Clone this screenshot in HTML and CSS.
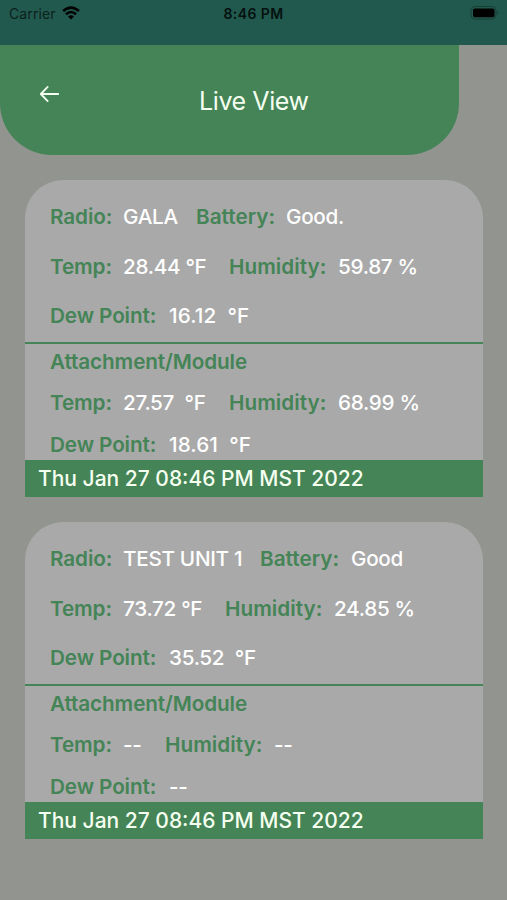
FILE: index.html
```html
<!DOCTYPE html>
<html lang="en">
<head>
<meta charset="utf-8">
<title>Live View</title>
<link rel="stylesheet" href="styles.css">
</head>
<body>
<div class="status">
  <div class="carrier"><span>Carrier</span>
    <svg class="wifi" width="18" height="14" viewBox="0 0 18 14"><g fill="none" stroke="#000"><path stroke-width="2.7" d="M1.1 5.1Q9 -1.9 16.9 5.1"/><path stroke-width="2.6" d="M4 8.2Q9 3.8 14 8.2"/></g><path d="M6 10.5Q9 7.9 12 10.5L9 13.5Z"/></svg>
  </div>
  <div class="clock">8:46 PM</div>
  <svg class="battery" width="30" height="14" viewBox="0 0 30 14"><rect x="1" y=".5" width="25" height="12.5" rx="4" fill="none" stroke="#183f34"/><rect x="3" y="2.5" width="21.5" height="8.8" rx="1.8"/><path fill="#183f34" d="M27.5 4.8q2 2 0 4z"/></svg>
</div>
<header class="header">
  <svg class="back" width="21" height="18" viewBox="0 0 21 18" fill="none" stroke="#f5fff0" stroke-width="1.8" stroke-linecap="round" stroke-linejoin="round"><path d="M19.2 9H1.8M8.7 1.9L1.8 9l6.9 7.1"/></svg>
  <h1 class="title">Live View</h1>
</header>
<main class="cards">
  <section class="card">
    <div class="base">
      <div class="row radio-gala"><b>Radio:</b><span>GALA</span><b class="wide">Battery:</b><span>Good.</span></div>
      <div class="row climate"><b>Temp:</b><span>28.44 °F</span><b class="wide">Humidity:</b><span>59.87 %</span></div>
      <div class="row dew"><b>Dew Point:</b><span class="wide">16.12&nbsp; °F</span></div>
    </div>
    <div class="module">
      <div class="row heading"><b>Attachment/Module</b></div>
      <div class="row climate"><b>Temp:</b><span>27.57&nbsp; °F</span><b class="wide">Humidity:</b><span>68.99 %</span></div>
      <div class="row dew last"><b>Dew Point:</b><span class="wide">18.61&nbsp; °F</span></div>
    </div>
    <footer class="stamp">Thu Jan 27 08:46 PM MST 2022</footer>
  </section>
  <section class="card">
    <div class="base">
      <div class="row radio-test"><b>Radio:</b><span>TEST UNIT 1</span><b class="wide">Battery:</b><span>Good</span></div>
      <div class="row climate-test"><b>Temp:</b><span>73.72 °F</span><b class="wide">Humidity:</b><span>24.85 %</span></div>
      <div class="row dew"><b>Dew Point:</b><span>35.52&nbsp; °F</span></div>
    </div>
    <div class="module">
      <div class="row heading"><b>Attachment/Module</b></div>
      <div class="row climate-empty"><b>Temp:</b><span>--</span><b class="wide">Humidity:</b><span>--</span></div>
      <div class="row dew last"><b>Dew Point:</b><span>--</span></div>
    </div>
    <footer class="stamp">Thu Jan 27 08:46 PM MST 2022</footer>
  </section>
</main>
</body>
</html>
```
FILE: styles.css
```css
* { box-sizing: border-box; }
body {
  margin: 0;
  height: 900px;
  overflow: hidden;
  background: #91948f;
  font-family: Inter, "Liberation Sans", sans-serif;
}
.status {
  height: 44.5px;
  padding: 5px 7px 0 9px;
  display: grid;
  grid-template-columns: 1fr auto 1fr;
  align-items: start;
  background: #22594e;
  color: #061713;
  font-size: 14px;
  line-height: 18px;
}
.carrier { display: flex; gap: 6px; color: #0a211c; letter-spacing: 0.12px; }
.wifi { margin-top: 1px; }
.clock { margin-left: -2px; font-weight: 600; color: #04110e; letter-spacing: 0.4px; }
.battery { justify-self: end; margin-top: 1px; }
.header {
  width: 459px;
  height: 110px;
  padding-left: 39px;
  display: flex;
  background: #448456;
  border-radius: 0 0 52px 52px;
}
.back { margin-top: 40px; flex: none; }
.title {
  margin: 40px 0 0 139px;
  font-size: 25px;
  line-height: 32px;
  font-weight: 400;
  letter-spacing: -0.4px;
  color: #f5fff0;
}
.cards {
  padding: 25px 24.5px 0 25px;
  display: grid;
  gap: 25px;
}
.card {
  height: 317px;
  overflow: hidden;
  border-radius: 38px 38px 0 0;
  background: #a9a9a9;
}
.base { height: 164.5px; padding: 12.5px 25px 0; border-bottom: 2.5px solid #448456; }
.module { height: 116px; padding: 0 25px; }
.row {
  display: grid;
  height: 49.6px;
  line-height: 50px;
  font-size: 20.7px;
  white-space: nowrap;
  color: #fff;
}
.row b { font-weight: 600; color: #448456; letter-spacing: -0.1px; }
.row b.wide { letter-spacing: 0.05px; }
.row span { font-weight: 450; letter-spacing: -0.3px; }
.row span.wide { letter-spacing: 0.1px; }
.module .row { height: 41.4px; line-height: 42.4px; }
.module .heading { height: 38.4px; line-height: 35.8px; }
.module .last { height: 36px; }
.radio-gala { grid-template-columns: 73px 73px 90px 1fr; }
.radio-test { grid-template-columns: 73px 137px 91px 1fr; }
.climate { grid-template-columns: 73px 106px 109px 1fr; }
.climate-test { grid-template-columns: 73px 102px 109px 1fr; }
.climate-empty { grid-template-columns: 73px 42px 109px 1fr; }
.dew { grid-template-columns: 119px 1fr; }
.stamp {
  height: 36.5px;
  padding-left: 13px;
  background: #448456;
  color: #f5fff0;
  font-size: 21px;
  font-weight: 450;
  line-height: 37px;
  white-space: nowrap;
}
```
